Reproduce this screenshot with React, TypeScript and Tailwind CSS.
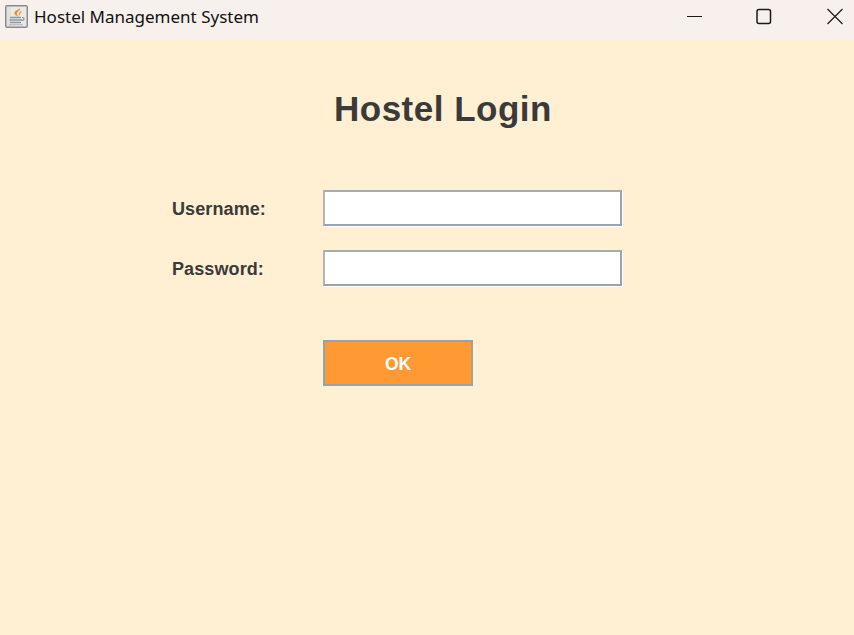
const fieldClass =
  "block h-[36px] w-[299px] bg-white border-2 border-[#98a4b0] border-t-[#a3adb6] border-l-[#aeb6bd] outline-none shadow-[1px_1px_0_#ffffff]";

function JavaIcon() {
  return (
    <svg width="23" height="23" viewBox="0 0 23 23" className="shrink-0">
      <rect x="0.75" y="0.75" width="21.500" height="21.500" rx="1.500" fill="#ece8e4" stroke="#858b91" strokeWidth="1.500" />
      <rect x="2" y="2" width="4" height="19" fill="#e3e0dd" />
      <path d="M15 3c.8 2.500-3.500 3.800-3.200 6 .2 1.300 1 1.800 1.500 2.500-2.200-.6-4.300-2-3.800-4 .5-2 4.500-2.300 5.500-4.500z" fill="#e58a2e" />
      <path d="M16.500 6.500c-1.400 1-3 1.700-2.300 3.700" fill="none" stroke="#ea9a48" strokeWidth="1.300" />
      <path d="M5 12.500h11M4.500 15h12.500M5 17.500h11" stroke="#8c96a2" strokeWidth="1.500" />
      <path d="M17 12.500c2.800-.4 2.800 3-.5 3" fill="none" stroke="#8c96a2" strokeWidth="1.100" />
      <path d="M4 19.800h14" stroke="#a8b0b8" strokeWidth="1" />
    </svg>
  );
}

function TitleBar() {
  return (
    <div className="flex h-10 items-start bg-[#f8f0ed] pl-[5px] pt-[5px]">
      <JavaIcon />
      <span className="ml-[6px] font-['Noto_Sans',sans-serif] text-[17px] leading-[23px] text-[#111]">
        Hostel Management System
      </span>
      <div className="ml-auto flex items-center">
        <svg width="70" height="23" viewBox="0 0 70 23">
          <path d="M43 11.500h15" stroke="#1a1a1a" strokeWidth="1" fill="none" />
        </svg>
        <svg width="70" height="23" viewBox="0 0 70 23">
          <rect x="43" y="4.500" width="13.500" height="14" rx="2" fill="none" stroke="#1a1a1a" strokeWidth="1.500" />
        </svg>
        <svg width="70" height="23" viewBox="0 0 70 23">
          <path d="M43.500 4l15 15M58.500 4l-15 15" stroke="#1a1a1a" strokeWidth="1.200" fill="none" />
        </svg>
      </div>
    </div>
  );
}

function Row({ label, type }: { label: string; type: string }) {
  return (
    <div className="flex items-center">
      <label className="w-[151px] pt-[2px] text-[18px] font-bold tracking-[0.1px] text-[#3a3a3a]">{label}</label>
      <input type={type} className={fieldClass} />
    </div>
  );
}

export default function App() {
  return (
    <div className="flex h-[635px] w-[854px] flex-col overflow-hidden bg-[#fff0d4] font-['Liberation_Sans',Arial,sans-serif]">
      <TitleBar />
      <div className="flex flex-col pl-[172px] pt-[48px]">
        <h1 className="ml-[162px] text-[35px] leading-[42px] font-bold tracking-[0.5px] text-[#3a3a3a]">Hostel Login</h1>
        <form className="mt-[60px] flex flex-col gap-[24px]">
          <Row label="Username:" type="text" />
          <Row label="Password:" type="password" />
          <button
            type="button"
            className="mt-[30px] ml-[151px] h-[46px] w-[150px] border-2 border-[#98a2a8] bg-[#ff9933] pt-[2px] text-[17.500px] font-bold text-white"
          >
            OK
          </button>
        </form>
      </div>
    </div>
  );
}
